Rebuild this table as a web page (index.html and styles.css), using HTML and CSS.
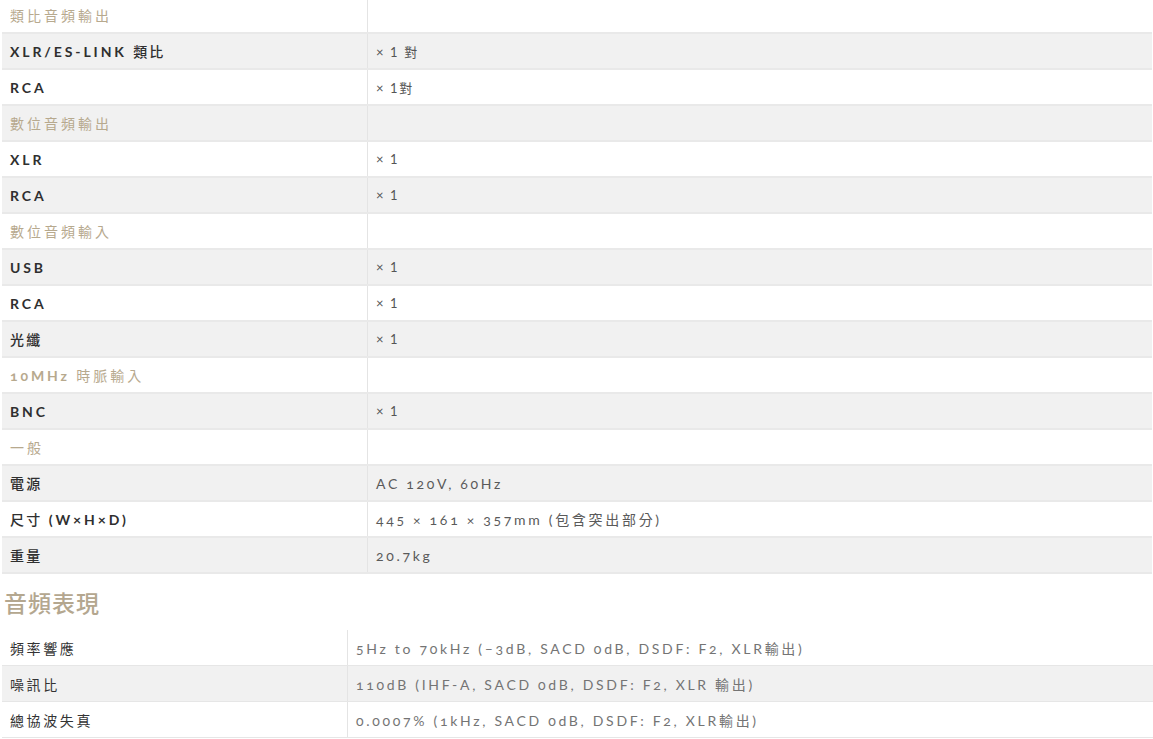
FILE: index.html
```html
<!DOCTYPE html>
<html lang="zh-Hant">
<head>
<meta charset="utf-8">
<title>規格</title>
<link rel="stylesheet" href="styles.css">
</head>
<body>
<div class="page">
  <div class="spec spec-io">
    <div class="row cat"><div class="k"><span class="cjk">類比音頻輸出</span></div><div class="v"></div></div>
    <div class="row"><div class="k">XLR/ES-LINK&nbsp;<span class="cjk">類比</span></div><div class="v">× 1 對</div></div>
    <div class="row"><div class="k">RCA</div><div class="v">× 1對</div></div>
    <div class="row cat"><div class="k"><span class="cjk">數位音頻輸出</span></div><div class="v"></div></div>
    <div class="row"><div class="k">XLR</div><div class="v">× 1</div></div>
    <div class="row"><div class="k">RCA</div><div class="v">× 1</div></div>
    <div class="row cat"><div class="k"><span class="cjk">數位音頻輸入</span></div><div class="v"></div></div>
    <div class="row"><div class="k">USB</div><div class="v">× 1</div></div>
    <div class="row"><div class="k">RCA</div><div class="v">× 1</div></div>
    <div class="row"><div class="k"><span class="cjk">光纖</span></div><div class="v">× 1</div></div>
    <div class="row cat"><div class="k"><span class="onum">10MHz</span>&nbsp;<span class="cjk">時脈輸入</span></div><div class="v"></div></div>
    <div class="row"><div class="k">BNC</div><div class="v">× 1</div></div>
    <div class="row cat"><div class="k"><span class="cjk">一般</span></div><div class="v"></div></div>
    <div class="row"><div class="k"><span class="cjk">電源</span></div><div class="v big">AC 120V, 60Hz</div></div>
    <div class="row"><div class="k"><span class="cjk">尺寸</span>&nbsp;(W×H×D)</div><div class="v big">445 × 161 × 357mm (包含突出部分)</div></div>
    <div class="row"><div class="k"><span class="cjk">重量</span></div><div class="v big">20.7kg</div></div>
  </div>

  <h2 class="section-title">音頻表現</h2>

  <div class="spec spec-perf">
    <div class="row"><div class="k">頻率響應</div><div class="v">5Hz to 70kHz (–3dB, SACD 0dB, DSDF: F2, XLR輸出)</div></div>
    <div class="row"><div class="k">噪訊比</div><div class="v">110dB (IHF-A, SACD 0dB, DSDF: F2, XLR 輸出)</div></div>
    <div class="row"><div class="k">總協波失真</div><div class="v">0.0007% (1kHz, SACD 0dB, DSDF: F2, XLR輸出)</div></div>
  </div>
</div>
</body>
</html>
```

FILE: styles.css
```css
html, body {
  margin: 0;
  padding: 0;
  background: #ffffff;
}

body {
  font-family: "Lato", "Noto Sans CJK TC", sans-serif;
  overflow: hidden;
}

.page {
  width: 1153px;
}

.spec {
  display: flex;
  flex-direction: column;
}

.spec-io {
  margin: -2px 1px 0 2px;
}

.row {
  display: grid;
  height: 36px;
  box-sizing: border-box;
  border-bottom: 2px solid #e9e9e9;
  background: #ffffff;
}

.spec-io .row {
  grid-template-columns: 366px 1fr;
}

.row:nth-child(even) {
  background: #f1f1f1;
}

.k, .v {
  display: flex;
  align-items: center;
  white-space: nowrap;
}

.k {
  padding-left: 8px;
  border-right: 1px solid #e4e4e4;
  font-size: 14px;
  font-weight: 700;
  letter-spacing: 2.9px;
  color: #2f2f2f;
}

.cjk {
  font-family: "Noto Sans CJK TC", sans-serif;
  font-weight: 500;
  letter-spacing: 2.2px;
}

.onum {
  font-variant-numeric: oldstyle-nums;
}

.v {
  padding-left: 8px;
  font-size: 13px;
  letter-spacing: 1.6px;
  color: #555555;
}

.v.big {
  font-size: 14px;
  letter-spacing: 2.7px;
  color: #5a5a5a;
  font-variant-numeric: oldstyle-nums;
}

.row.cat .k {
  color: #b7a98e;
}

.row.cat .cjk {
  font-weight: 400;
  letter-spacing: 3px;
}

.section-title {
  margin: 14px 0 0 4px;
  height: 42px;
  font-size: 23px;
  font-weight: 500;
  letter-spacing: 1px;
  color: #b4a78f;
  line-height: 28px;
  font-family: "Noto Sans CJK TC", sans-serif;
}

.spec-perf {
  margin: 0 0 0 2px;
}

.spec-perf .row {
  grid-template-columns: 346px 1fr;
  border-bottom: 1px solid #e6e6e6;
}

.spec-perf .k {
  font-family: "Noto Sans CJK TC", sans-serif;
  font-weight: 400;
  color: #333333;
  letter-spacing: 2.6px;
}

.spec-perf .v {
  font-size: 14px;
  letter-spacing: 2.7px;
  color: #747474;
  font-variant-numeric: oldstyle-nums;
}
```
